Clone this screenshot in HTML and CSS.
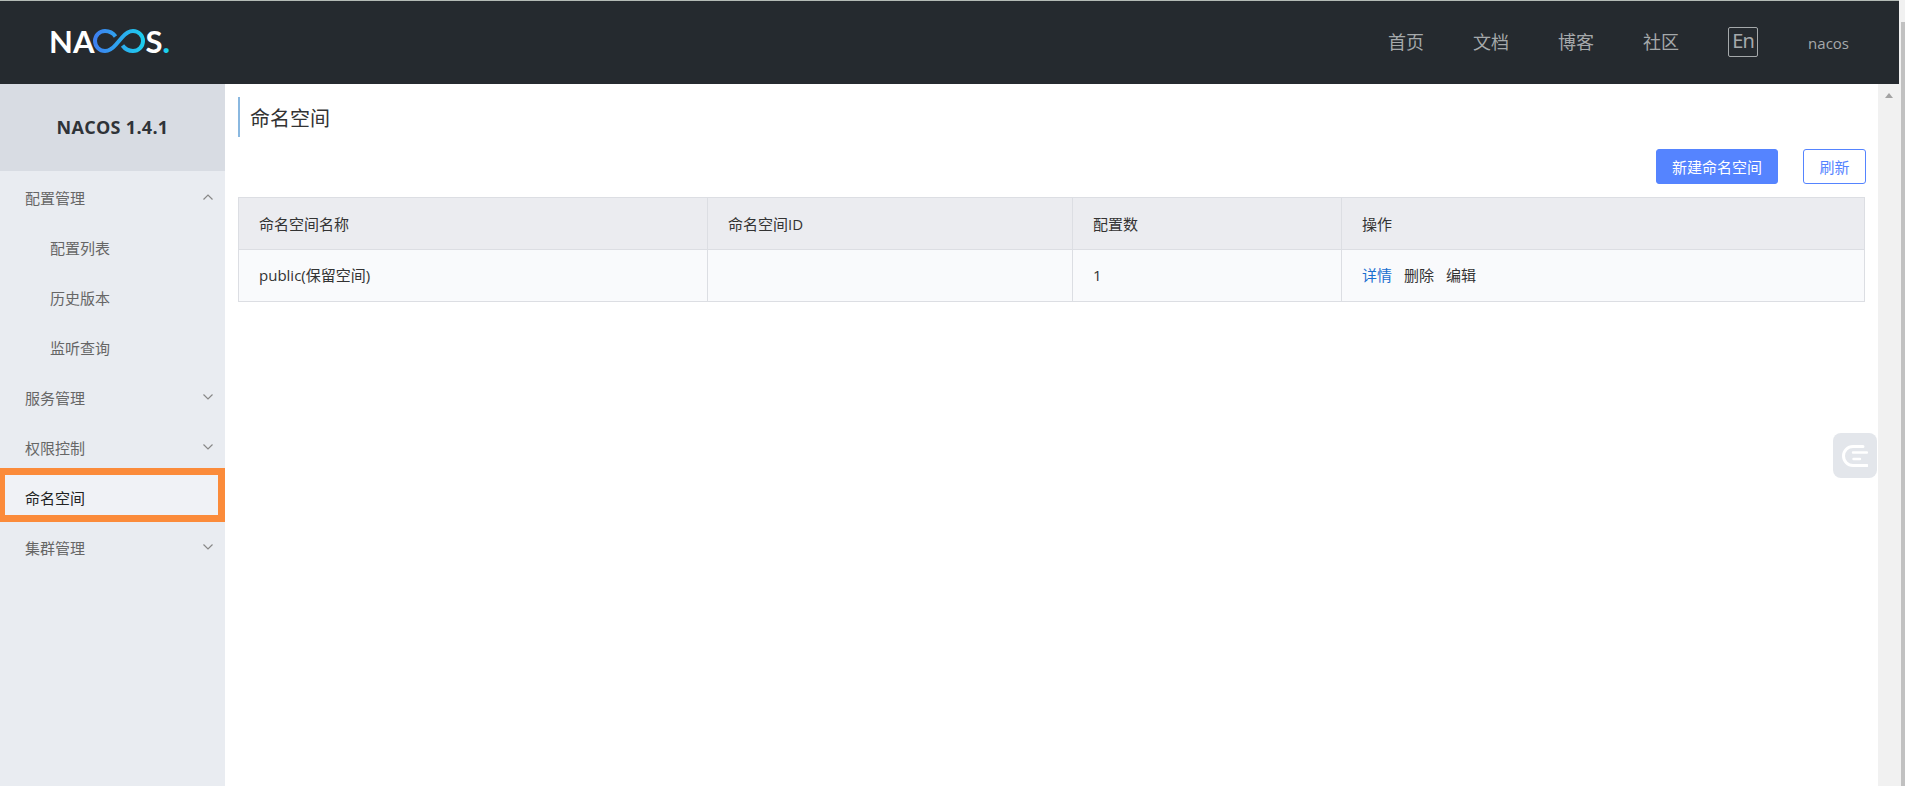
FILE: index.html
```html
<!DOCTYPE html>
<html lang="zh">
<head>
<meta charset="utf-8">
<title>Nacos</title>
<link rel="stylesheet" href="styles.css">
</head>
<body>
<div class="window">
  <div class="app">
    <header class="header">
      <div class="logo">
        <span class="logo-text">NA</span>
        <svg class="logo-inf" width="52" height="24" viewBox="0 0 52 24" fill="none">
          <defs>
            <linearGradient id="inf" gradientUnits="userSpaceOnUse" x1="0" x2="52" y1="0" y2="0">
              <stop offset="0" stop-color="#3f7df0"/>
              <stop offset="1" stop-color="#1cd0ee"/>
            </linearGradient>
          </defs>
          <path d="M22.500 7.500C20 4 16.500 2 12 2 6.500 2 2 6.500 2 12s4.500 10 10 10c5 0 8-3 11-6.500l6-7c3-3.500 6-6.500 11-6.500 5.500 0 10 4.500 10 10s-4.500 10-10 10c-4.500 0-8-2-10.500-5.500" stroke="url(#inf)" stroke-width="4"/>
        </svg>
        <span class="logo-text">S</span><span class="logo-dot">.</span>
      </div>
      <nav class="nav">
        <a class="nav-link">首页</a>
        <a class="nav-link">文档</a>
        <a class="nav-link">博客</a>
        <a class="nav-link">社区</a>
        <a class="lang">En</a>
        <a class="user">nacos</a>
      </nav>
    </header>
    <div class="body">
      <aside class="sidebar">
        <div class="version">NACOS 1.4.1</div>
        <ul class="menu">
          <li class="menu-item">配置管理<svg class="chev" viewBox="0 0 12 8"><path d="M1.500 6.500 6 2l4.500 4.500"/></svg></li>
          <li class="menu-item sub">配置列表</li>
          <li class="menu-item sub">历史版本</li>
          <li class="menu-item sub">监听查询</li>
          <li class="menu-item">服务管理<svg class="chev" viewBox="0 0 12 8"><path d="M1.500 1.500 6 6l4.500-4.500"/></svg></li>
          <li class="menu-item">权限控制<svg class="chev" viewBox="0 0 12 8"><path d="M1.500 1.500 6 6l4.500-4.500"/></svg></li>
          <li class="menu-item active">命名空间</li>
          <li class="menu-item">集群管理<svg class="chev" viewBox="0 0 12 8"><path d="M1.500 1.500 6 6l4.500-4.500"/></svg></li>
        </ul>
      </aside>
      <main class="main">
        <h1 class="page-title">命名空间</h1>
        <div class="actions">
          <button class="btn primary">新建命名空间</button>
          <button class="btn outline">刷新</button>
        </div>
        <table class="table">
          <colgroup>
            <col class="c1"><col class="c2"><col class="c3"><col class="c4">
          </colgroup>
          <thead>
            <tr><th>命名空间名称</th><th>命名空间ID</th><th>配置数</th><th>操作</th></tr>
          </thead>
          <tbody>
            <tr>
              <td>public(保留空间)</td>
              <td></td>
              <td>1</td>
              <td><a class="op link">详情</a><a class="op">删除</a><a class="op">编辑</a></td>
            </tr>
          </tbody>
        </table>
        <div class="float-btn">
          <svg width="26" height="24" viewBox="0 0 26 24" fill="none">
            <path d="M21 2.500H11a9.500 9.500 0 0 0 0 19h14" stroke="#fff" stroke-width="3" stroke-linecap="round"/>
            <path d="M11 8.500h14M11.500 15H18" stroke="#fff" stroke-width="2.400" stroke-linecap="round"/>
          </svg>
        </div>
      </main>
      <div class="inner-scroll"><span class="arrow"></span></div>
    </div>
  </div>
  <div class="outer-scroll"><div class="outer-thumb"></div></div>
</div>
</body>
</html>
```
FILE: styles.css
```css
* { box-sizing: border-box; }
html, body { margin: 0; height: 100%; overflow: hidden; }
body {
  font-family: "Open Sans", "Noto Sans CJK SC", "Noto Sans", sans-serif;
  font-size: 14px;
  color: #333;
  background: #fff;
}
.window { display: flex; height: 786px; }
.app { flex: 1; display: flex; flex-direction: column; min-width: 0; background: #f1f1f1; }
.header {
  height: 84px;
  flex: none;
  margin-right: 2px;
  background: #252a2f;
  border-top: 1px solid #b4bbb6;
  display: flex;
  align-items: center;
  justify-content: space-between;
  padding: 0 50px 0 49px;
}
.logo { display: flex; align-items: center; height: 24px; margin-top: -3px; }
.logo-text { font-family: "Lato", sans-serif; font-weight: 700; font-size: 31px; line-height: 24px; color: #fff; }
.logo-inf { margin: 0 0 0 -1px; }
.logo-dot { font-family: "Lato", sans-serif; font-weight: 900; font-size: 31px; line-height: 24px; color: #1cd0ee; }
.nav { display: flex; align-items: center; gap: 49px; color: #a5a9ab; }
.nav-link { font-size: 18px; line-height: 24px; margin-top: -2px; }
.lang {
  width: 30px;
  height: 30px;
  margin-top: -1px;
  border: 1px solid #a5a9ab;
  border-radius: 2px;
  font-family: "Noto Sans", sans-serif;
  font-size: 20px;
  letter-spacing: -1px;
  line-height: 25px;
  text-align: center;
}
.user { font-size: 15px; font-weight: 500; margin-left: 1px; }
.body { flex: 1; display: flex; min-height: 0; }
.sidebar { width: 225px; flex: none; background: #e9ecf1; }
.version {
  height: 87px;
  padding-bottom: 2px;
  background: #d8dce3;
  display: flex;
  align-items: center;
  justify-content: center;
  font-size: 18px;
  font-weight: 700;
  letter-spacing: .3px;
  color: #2f3338;
}
.menu { list-style: none; margin: 0; padding: 2px 0 0; }
.menu-item {
  position: relative;
  height: 50px;
  line-height: 50px;
  padding-left: 25px;
  color: #666;
  font-size: 15px;
}
.menu-item.sub { padding-left: 50px; }
.menu-item.active {
  background: #f0f2f6;
  color: #222;
  border: 7px solid #fb8b3a;
  border-width: 7px 7px 7px 5px;
  padding-left: 20px;
  line-height: 46px;
  height: 54px;
  margin: -5px 0 1px;
}
.chev {
  position: absolute;
  right: 11px;
  top: 20px;
  width: 12px;
  height: 8px;
  fill: none;
  stroke: #888;
  stroke-width: 1.200;
}
.main { flex: 1; position: relative; min-width: 0; padding: 13px 12px 0 13px; background: #fff; }
.page-title {
  margin: 0;
  height: 40px;
  line-height: 43px;
  padding-left: 10px;
  border-left: 2px solid #8ab8e0;
  font-size: 20px;
  font-weight: 400;
  color: #333;
}
.actions { display: flex; justify-content: flex-end; gap: 25px; margin-top: 12px; }
.btn {
  height: 35px;
  border-radius: 3px;
  font: inherit;
  font-size: 15px;
  padding: 0;
}
.primary { width: 122px; background: #5584ff; color: #fff; border: 1px solid #5584ff; }
.outline { width: 63px; background: #fff; color: #5584ff; border: 1px solid #5584ff; }
.table {
  width: 1627px;
  margin-top: 13px;
  border-collapse: collapse;
  table-layout: fixed;
  font-size: 15px;
  color: #333;
}
.c1 { width: 469px; }
.c2 { width: 365px; }
.c3 { width: 269px; }
.table th, .table td {
  border: 1px solid #dcdee3;
  height: 52px;
  padding: 0 20px;
  font-weight: 400;
  text-align: left;
}
.table th { background: #ebecf0; }
.table td { background: #f9fafc; padding-bottom: 2px; }
.op { margin-right: 12px; }
.link { color: #1a6fd0; }
.float-btn {
  position: absolute;
  right: 1px;
  top: 349px;
  width: 44px;
  height: 45px;
  border-radius: 8px;
  background: #e3e6eb;
  display: flex;
  align-items: center;
  justify-content: center;
}
.inner-scroll { width: 23px; flex: none; background: #f1f1f1; display: flex; justify-content: center; align-items: flex-start; padding: 9px 2px 0 0; }
.arrow { width: 0; height: 0; border: 4.500px solid transparent; border-top: 0; border-bottom: 5px solid #a3a3a3; }
.outer-scroll { width: 4px; flex: none; background: #f1f1f1; padding-top: 22px; }
.outer-thumb { height: 100%; background: #c1c1c1; }
```
